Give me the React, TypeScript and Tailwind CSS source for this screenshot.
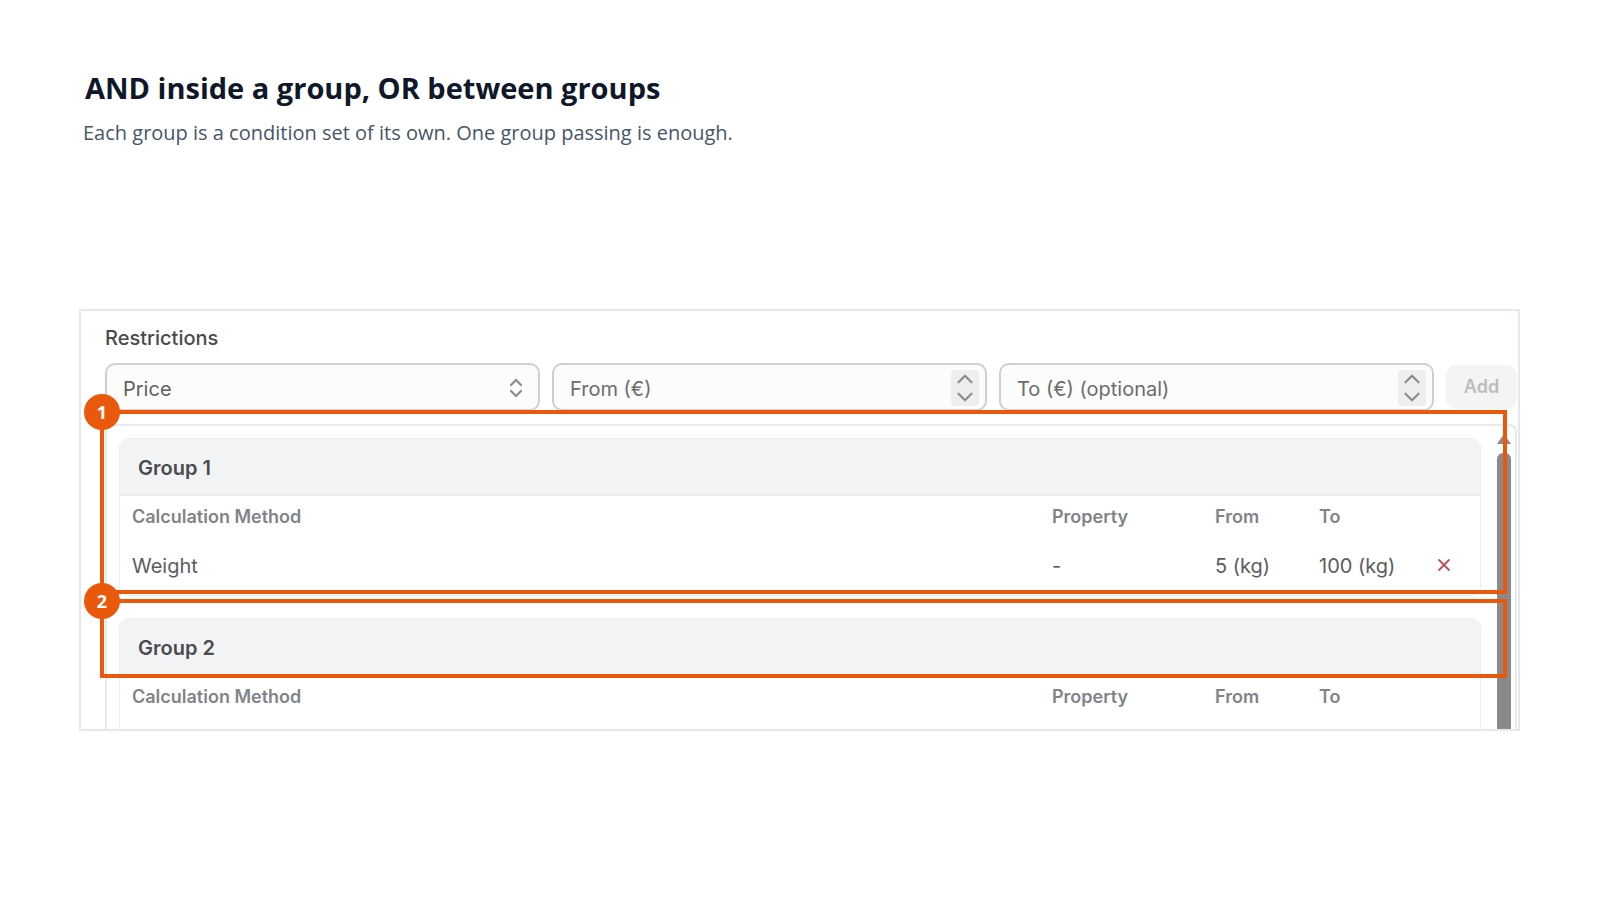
import { useState } from 'react';
import { ChevronDown, ChevronUp, ChevronsUpDown, X } from 'lucide-react';

type Restriction = { method: string; property: string; from: string; to: string }

const groups: { name: string; rows: Restriction[] }[] = [
  { name: 'Group 1', rows: [{ method: 'Weight', property: '-', from: '5 (kg)', to: '100 (kg)' }] },
  { name: 'Group 2', rows: [] },
]

function NumberField({ label }: { label: string }) {
  const [value, setValue] = useState('')

  const step = (amount: number) => {
    setValue((v) => String(Math.max(0, (Number(v) || 0) + amount)))
  }

  return (
    <div className="relative">
      <input
        type="text"
        inputMode="decimal"
        aria-label={label}
        placeholder={label}
        value={value}
        onChange={(e) => setValue(e.target.value)}
        className="h-12 w-full rounded-[10px] border-2 border-[#cfcfcf] bg-[#fcfcfc] pt-1 pr-12 pl-4 text-[#5c5c5c] placeholder:text-[#6c6c6c] outline-none"
      />
      <div className="absolute top-[7px] right-2 flex w-7 flex-col rounded bg-[#eeeeee] text-[#8c8c8c]">
        <button type="button" aria-label={`Increase ${label}`} onClick={() => step(1)} className="flex h-[18px] items-center justify-center">
          <ChevronUp size={26} strokeWidth={2} className="shrink-0" />
        </button>
        <button type="button" aria-label={`Decrease ${label}`} onClick={() => step(-1)} className="flex h-[18px] items-center justify-center">
          <ChevronDown size={26} strokeWidth={2} className="shrink-0" />
        </button>
      </div>
    </div>
  )
}

function GroupCard({ name, rows }: { name: string; rows: Restriction[] }) {
  return (
    <section className="min-h-[158px] shrink-0 overflow-hidden rounded-[10px] border border-[#ebecee]">
      <h3 className="flex h-[57px] items-center border-b-2 border-[#e8eaec] bg-[#f2f3f5] px-[18px] pt-[2px] font-semibold text-[#4b4b4d]">
        {name}
      </h3>
      <table className="w-full table-fixed text-left">
        <thead>
          <tr className="h-[42px] text-lg text-[#808488]">
            <th className="pl-3 font-semibold">Calculation Method</th>
            <th className="w-[163px] pl-3 font-semibold">Property</th>
            <th className="w-[104px] pl-3 font-semibold">From</th>
            <th className="w-[119px] pl-3 font-semibold">To</th>
            <th className="w-[54px]" />
          </tr>
        </thead>
        <tbody>
          {rows.map((row) => (
            <tr key={row.method} className="h-14 text-[#5c5c5e]">
              <td className="pl-3">{row.method}</td>
              <td className="pl-3">{row.property}</td>
              <td className="pl-3">{row.from}</td>
              <td className="pl-3">{row.to}</td>
              <td className="pb-[2px] pl-2">
                <button type="button" aria-label="Remove" className="block text-[#c4505c]">
                  <X size={20} strokeWidth={2.2} />
                </button>
              </td>
            </tr>
          ))}
        </tbody>
      </table>
    </section>
  )
}

function Badge({ children }: { children: string }) {
  return (
    <span className="absolute -top-5 -left-5 flex size-9 items-center justify-center rounded-full bg-[#ea580c] font-['Open_Sans',sans-serif] text-lg font-bold text-white">
      {children}
    </span>
  )
}

export default function App() {
  const [method, setMethod] = useState('Price')

  return (
    <main className="min-h-screen bg-white pt-16 pr-20 pb-20 pl-[79px]">
      <header className="px-1 font-['Open_Sans','Noto_Sans',sans-serif]">
        <h1 className="pl-[2px] text-[29px] leading-12 font-bold text-[#0f172a]">AND inside a group, OR between groups</h1>
        <p className="text-[20px] leading-[42px] text-[#475569]">
          Each group is a condition set of its own. One group passing is enough.
        </p>
      </header>

      <div className="relative mt-[155px] border-2 border-[#e2e8f0] pt-[13px] pr-px pl-6 font-['Inter',sans-serif] text-xl">
        <h2 className="leading-7 font-medium text-[#4a4a4a]">Restrictions</h2>

        <div className="mt-[11px] grid grid-cols-[1fr_1fr_1fr_71px] items-center gap-3">
          <div className="relative">
            <select
              aria-label="Calculation method"
              value={method}
              onChange={(e) => setMethod(e.target.value)}
              className="h-12 w-full appearance-none rounded-[10px] border-2 border-[#cfcfcf] bg-[#fcfcfc] px-4 pt-1 text-[#606060] outline-none"
            >
              <option>Price</option>
              <option>Weight</option>
            </select>
            <ChevronsUpDown size={24} strokeWidth={2.2} className="pointer-events-none absolute top-[13px] right-3 text-[#8c8c8c]" />
          </div>
          <NumberField label="From (€)" />
          <NumberField label="To (€) (optional)" />
          <button type="button" disabled className="h-11 rounded-[10px] bg-[#f4f4f4] text-lg font-semibold text-[#bcbcbc]">
            Add
          </button>
        </div>

        <div className="mt-[13px] flex max-h-[305px] gap-4 overflow-hidden rounded-t-lg border-x-2 border-t-2 border-[#e9e9ea] pr-1 pl-3">
          <div className="flex min-w-0 flex-1 flex-col gap-[22px] pt-3">
            {groups.map((group) => (
              <GroupCard key={group.name} {...group} />
            ))}
          </div>
          <div className="flex w-[14px] flex-col items-center pt-2">
            <svg width="14" height="10" viewBox="0 0 14 10" className="shrink-0 fill-[#8a8a8a]">
              <path d="M7 0 14 10H0z" />
            </svg>
            <div className="mt-[9px] w-full flex-1 rounded-t-md bg-[#8a8a8a]" />
          </div>
        </div>

        <div className="pointer-events-none absolute top-[99px] right-[11px] left-[19px] h-[184px] border-4 border-[#ea580c]">
          <Badge>1</Badge>
        </div>
        <div className="pointer-events-none absolute top-[288px] right-[11px] left-[19px] h-[79px] border-4 border-[#ea580c]">
          <Badge>2</Badge>
        </div>
      </div>
    </main>
  )
}
